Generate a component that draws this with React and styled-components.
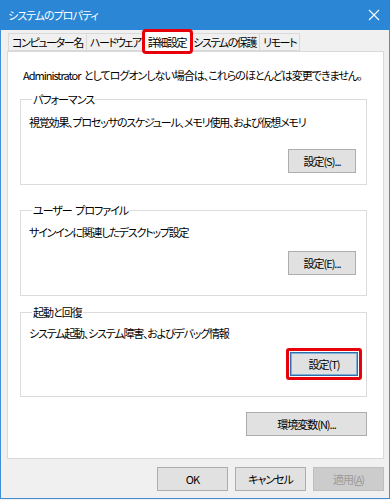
import styled, { createGlobalStyle } from 'styled-components'

const GlobalStyle = createGlobalStyle`
    html, body {
        margin: 0;
        padding: 0;
        background: #f0f0f0;
    }
    body {
        font-family: "Noto Sans CJK JP", "Noto Sans", sans-serif;
        font-size: 11px;
        letter-spacing: -1px;
        word-spacing: 2px;
        font-feature-settings: "palt" 1;
        color: #000;
    }
`

const tabs = ['コンピューター名', 'ハードウェア', '詳細設定', 'システムの保護', 'リモート']

export default function App() {
    return (
        <Window>
            <GlobalStyle />
            <TitleBar>
                <Title>システムのプロパティ</Title>
                <CloseIcon width="12" height="12" viewBox="0 0 12 12">
                    <path d="M1 1 L11 11 M11 1 L1 11" stroke="#fff" strokeWidth="1.1" />
                </CloseIcon>
            </TitleBar>

            <Body>
                <TabStrip>
                    {tabs.map((t, i) => (
                        <Tab key={t} $active={i === 2}>{t}</Tab>
                    ))}
                </TabStrip>

                <Panel>
                    <Notice>Administrator としてログオンしない場合は、これらのほとんどは変更できません。</Notice>

                    <Group $top={8} $bottom={11}>
                        <Legend>パフォーマンス</Legend>
                        <Desc $top={7}>視覚効果、プロセッサのスケジュール、メモリ使用、および仮想メモリ</Desc>
                        <ButtonRow $top={19}>
                            <Button>設定(S)...</Button>
                        </ButtonRow>
                    </Group>

                    <Group $top={17} $bottom={20}>
                        <Legend>ユーザー プロファイル</Legend>
                        <Desc $top={6}>サインインに関連したデスクトップ設定</Desc>
                        <ButtonRow $top={11}>
                            <Button>設定(E)...</Button>
                        </ButtonRow>
                    </Group>

                    <Group $top={8} $bottom={20}>
                        <Legend>起動と回復</Legend>
                        <Desc $top={5}>システム起動、システム障害、およびデバッグ情報</Desc>
                        <ButtonRow $top={11}>
                            <Highlight>
                                <Button $default>設定(T)</Button>
                            </Highlight>
                        </ButtonRow>
                    </Group>

                    <EnvRow>
                        <Button $wide>環境変数(N)...</Button>
                    </EnvRow>
                </Panel>

                <Footer>
                    <Button $footer>OK</Button>
                    <Button $footer>キャンセル</Button>
                    <Button $footer $disabled>適用(<u>A</u>)</Button>
                </Footer>
            </Body>
        </Window>
    )
}

const Window = styled.div`
    width: 390px;
    height: 499px;
    box-sizing: border-box;
    border: 1px solid #3f8fd2;
    border-top: none;
    display: flex;
    flex-direction: column;
    background: #f0f0f0;
`

const TitleBar = styled.div`
    height: 30px;
    margin: 0 -1px;
    background: #2b87d6;
    display: flex;
    align-items: center;
    justify-content: space-between;
    padding: 0 8px 0 8px;
`

const Title = styled.div`
    color: #fff;
    font-size: 11px;
`

const CloseIcon = styled.svg`
    display: block;
    margin-right: 2px;
`

const Body = styled.div`
    flex: 1;
    display: flex;
    flex-direction: column;
    padding: 0 5px 0 6px;
`

const TabStrip = styled.div`
    display: flex;
    align-items: flex-end;
    height: 21px;
    padding-left: 1px;
    position: relative;
    z-index: 1;
`

const Tab = styled.div`
    flex: none;
    height: ${p => (p.$active ? '21px' : '18px')};
    line-height: ${p => (p.$active ? '20px' : '17px')};
    padding: 0 ${p => (p.$active ? '4px' : '3px')};
    margin: 0 ${p => (p.$active ? '-1px' : '0')} ${p => (p.$active ? '-1px' : '0')};
    box-sizing: border-box;
    letter-spacing: -1.4px;
    background: ${p => (p.$active ? '#fff' : '#f0f0f0')};
    border: 1px solid #d9d9d9;
    border-bottom: ${p => (p.$active ? 'none' : '1px solid #d9d9d9')};
    border-left: none;
    white-space: nowrap;
    ${p => p.$active && `
        outline: 3px solid #e8000b;
        outline-offset: -1px;
        border-radius: 2px;
        position: relative;
        z-index: 2;
    `}
    &:first-child {
        border-left: 1px solid #d9d9d9;
    }
`

const Panel = styled.div`
    background: #fff;
    border: 1px solid #d9d9d9;
    height: 408px;
    box-sizing: border-box;
    padding: 15px 16px 0 12px;
    display: flex;
    flex-direction: column;
`

const Notice = styled.div`
    line-height: 16px;
    padding-left: 3px;
    white-space: nowrap;
`

const Group = styled.fieldset`
    margin: ${p => p.$top}px 0 0;
    padding: 0 10px ${p => p.$bottom}px 8px;
    border: 1px solid #dcdcdc;
    min-width: 0;
`

const Legend = styled.legend`
    padding: 0 1px;
    margin-left: 3px;
    line-height: 16px;
`

const Desc = styled.div`
    margin-top: ${p => p.$top}px;
    line-height: 16px;
    letter-spacing: -1.2px;
    white-space: nowrap;
`

const ButtonRow = styled.div`
    margin-top: ${p => p.$top}px;
    display: flex;
    justify-content: flex-end;
`

const Highlight = styled.div`
    margin: -4px -6px -4px 0;
    padding: 1px;
    border: 3px solid #e8000b;
    border-radius: 3px;
`

const Button = styled.div`
    width: ${p => (p.$wide ? '121px' : p.$footer ? '71px' : '68px')};
    height: 24px;
    box-sizing: border-box;
    background: ${p => (p.$disabled ? '#cccccc' : '#e1e1e1')};
    border: 1px solid ${p => (p.$default ? '#2f6fa8' : p.$disabled ? '#bfbfbf' : '#adadad')};
    ${p => p.$default && 'box-shadow: inset 0 0 0 1px #7fb0dc;'}
    color: ${p => (p.$disabled ? '#9b9b9b' : '#000')};
    display: flex;
    align-items: center;
    justify-content: center;
    white-space: nowrap;
`

const EnvRow = styled.div`
    display: flex;
    justify-content: flex-end;
    margin-top: 15px;
`

const Footer = styled.div`
    display: flex;
    justify-content: flex-end;
    gap: 7px;
    margin-top: 8px;
`
